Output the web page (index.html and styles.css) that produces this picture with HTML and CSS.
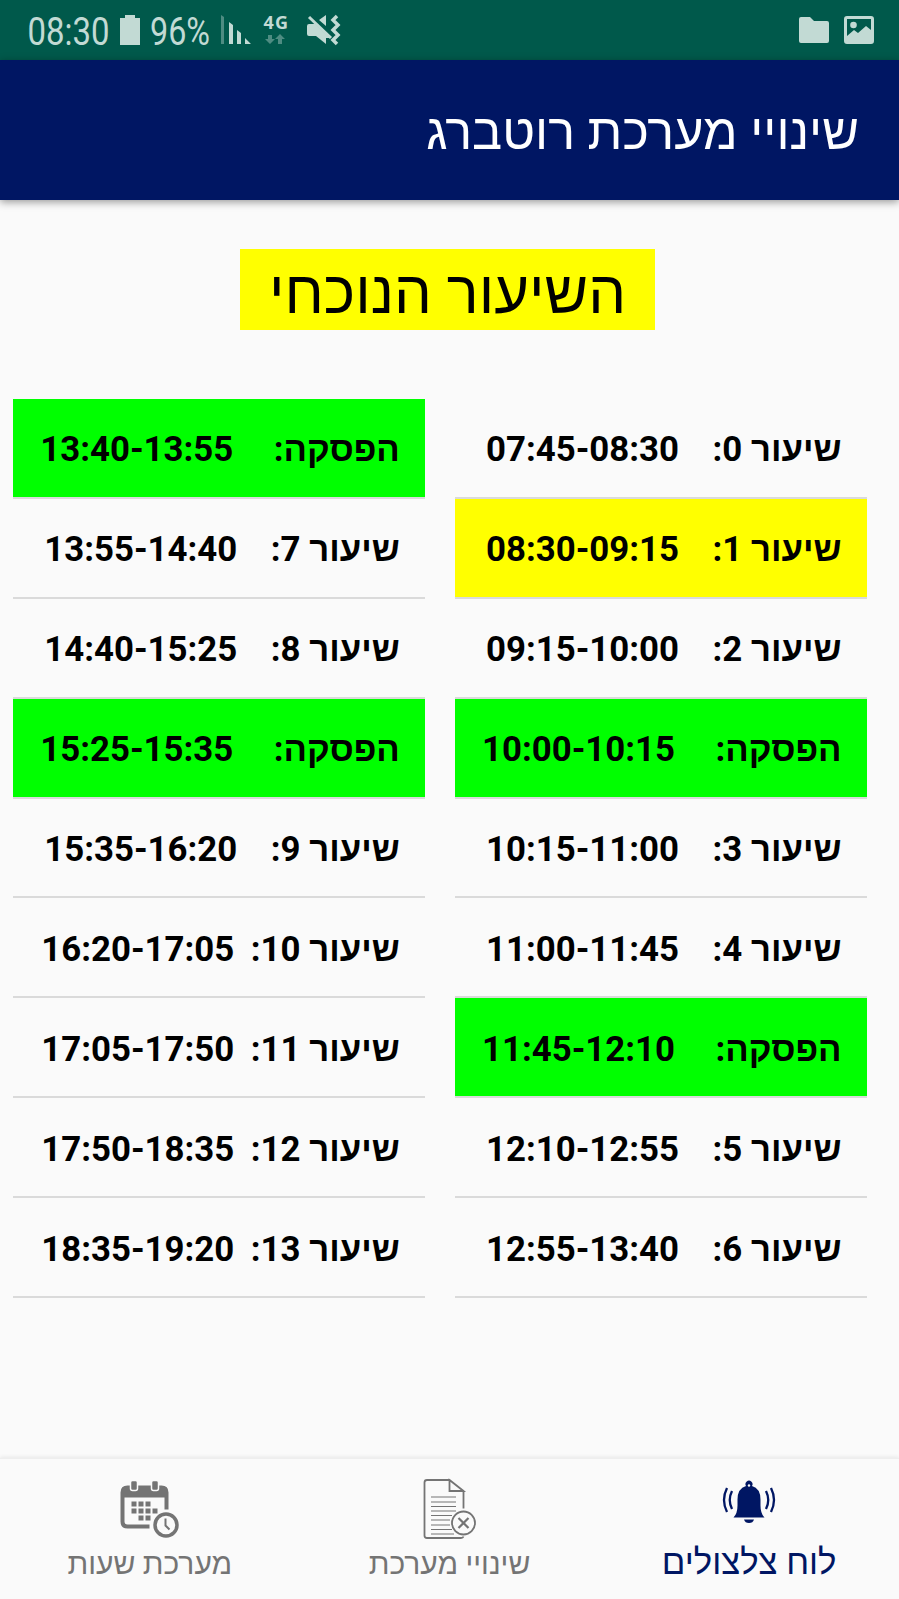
FILE: index.html
```html
<!DOCTYPE html>
<html lang="he" dir="rtl">
<head>
<meta charset="utf-8">
<title>שינויי מערכת רוטברג</title>
<link rel="stylesheet" href="styles.css">
</head>
<body>
<div class="status" dir="ltr">
  <svg class="status-left" width="350" height="60" viewBox="0 0 350 60">
    <text x="27.5" y="44.500" font-size="38" textLength="82" lengthAdjust="spacingAndGlyphs">08:30</text>
    <path d="M125 15h10v3h5v27h-20V18h5z"/>
    <text x="150" y="44.500" font-size="38" textLength="60" lengthAdjust="spacingAndGlyphs">96%</text>
    <path opacity=".4" d="M221 15l3 2v27h-3z"/>
    <path d="M229 22l4 3v19h-4zM237 30l4 3v11h-4zM245 38l6 6h-6z"/>
    <text class="net" x="263.500" y="29" font-size="18" textLength="24.500">4G</text>
    <path opacity=".4" d="M268 35h4v4h3l-5 5-5-5h3zM278 44h4v-5h3l-5-5-5 5h3z"/>
    <path d="M309 24h6l15 14h-4v6l-10-8h-7q-2 0-2-2v-8q0-2 2-2zM319 20l7-5v11z"/>
    <path d="M309 17l22 21" fill="none" stroke="#c2dad4" stroke-width="3"/>
    <path d="M337 16l-4 4 5 5-5 5 5 5-5 5 4 4" fill="none" stroke="#c2dad4" stroke-width="3.500"/>
  </svg>
  <svg class="status-right" width="110" height="60" viewBox="0 0 110 60">
    <path d="M12 17h8l4 4h13q2 0 2 2v18q0 2-2 2H11q-2 0-2-2V19q0-2 2-2z"/>
    <path fill-rule="evenodd" d="M57 16h24q3 0 3 3v22q0 3-3 3H57q-3 0-3-3V19q0-3 3-3zm0 3v17l7-6 4 3 8-7 5 4V19z"/>
    <circle cx="63.500" cy="25" r="3.300"/>
  </svg>
</div>
<header class="appbar"><h1>שינויי מערכת רוטברג</h1></header>
<main>
  <div class="current"><span>השיעור הנוכחי</span></div>
  <div class="columns">
    <div class="column">
      <div class="row"><b>שיעור 0:</b><time>07:45-08:30</time></div>
      <div class="row now"><b>שיעור 1:</b><time>08:30-09:15</time></div>
      <div class="row"><b>שיעור 2:</b><time>09:15-10:00</time></div>
      <div class="row break"><b>הפסקה:</b><time>10:00-10:15</time></div>
      <div class="row"><b>שיעור 3:</b><time>10:15-11:00</time></div>
      <div class="row"><b>שיעור 4:</b><time>11:00-11:45</time></div>
      <div class="row break"><b>הפסקה:</b><time>11:45-12:10</time></div>
      <div class="row"><b>שיעור 5:</b><time>12:10-12:55</time></div>
      <div class="row"><b>שיעור 6:</b><time>12:55-13:40</time></div>
    </div>
    <div class="column">
      <div class="row break"><b>הפסקה:</b><time>13:40-13:55</time></div>
      <div class="row"><b>שיעור 7:</b><time>13:55-14:40</time></div>
      <div class="row"><b>שיעור 8:</b><time>14:40-15:25</time></div>
      <div class="row break"><b>הפסקה:</b><time>15:25-15:35</time></div>
      <div class="row"><b>שיעור 9:</b><time>15:35-16:20</time></div>
      <div class="row wide"><b>שיעור 10:</b><time>16:20-17:05</time></div>
      <div class="row wide"><b>שיעור 11:</b><time>17:05-17:50</time></div>
      <div class="row wide"><b>שיעור 12:</b><time>17:50-18:35</time></div>
      <div class="row wide"><b>שיעור 13:</b><time>18:35-19:20</time></div>
    </div>
  </div>
</main>
<nav class="tabs">
  <a class="tab active">
    <svg width="100" height="81" viewBox="699 1458 100 81">
      <g fill="#001663"><path d="M733.500 1516.500q4-4 4-12v-6q0-11 8.500-13.500a3.500 3.500 0 1 1 6 0q8.500 2.500 8.500 13.500v6q0 8 4 12z"/><path d="M744 1518.500h10q-1 3.500-5 3.500t-5-3.500z"/></g>
      <circle cx="749" cy="1484.500" r="1.200" fill="#fafafa"/>
      <path fill="none" stroke="#001663" stroke-width="2.300" d="M727 1487q-6 12 0 24M732 1490q-4.500 9 0 18M771 1487q6 12 0 24M766 1490q4.500 9 0 18"/>
    </svg>
    <span>לוח צלצולים</span>
  </a>
  <a class="tab">
    <svg width="100" height="83" viewBox="400 1458.500 100 83">
      <g fill="none" stroke="#747474" stroke-width="1.800"><path d="M463.500 1508v-17.500l-14-11H427q-2.500 0-2.500 2.500v53q0 2.500 2.500 2.500h34q2 0 2.500-1.500M449.500 1479.500v11h14z"/>
      <path stroke-width="1.200" d="M431 1496.500h25M431 1501.500h25M431 1506h25M431 1510.500h25M431 1515h21M431 1519.500h19M431 1524.500h19M431 1529h21M431 1533.500h23"/>
      <circle cx="463.500" cy="1522.500" r="11.500"/><path stroke-width="2.200" d="M458.500 1517.500l10 10m0-10l-10 10"/></g>
    </svg>
    <span>שינויי מערכת</span>
  </a>
  <a class="tab">
    <svg width="100" height="83" viewBox="100.500 1458.500 100 83">
      <path fill="#747474" d="M121 1492q0-7 7-7h34q7 0 7 7v17h-4v-12h-40v24q0 3 3 3h22v4h-22q-7 0-7-7z"/>
      <g fill="#747474" stroke="#fafafa" stroke-width="1.500"><rect x="131" y="1480" width="7" height="10" rx="2"/><rect x="152" y="1480" width="7" height="10" rx="2"/></g>
      <path fill="#747474" d="M132 1501h5v5h-5zm7 0h5v5h-5zm7 0h5v5h-5zm-14 7h5v5h-5zm7 0h5v5h-5zm7 0h5v5h-5zm7 0h5v5h-5zm-14 7h5v5h-5zm7 0h5v5h-5z"/>
      <circle cx="166.500" cy="1524.500" r="11" fill="#fafafa" stroke="#747474" stroke-width="3.500"/>
      <path fill="none" stroke="#747474" stroke-width="2" d="M166 1518v7l4 4"/>
    </svg>
    <span>מערכת שעות</span>
  </a>
</nav>
</body>
</html>
```
FILE: styles.css
```css
* { box-sizing: border-box; }
body {
  margin: 0;
  width: 899px;
  height: 1599px;
  display: flex;
  flex-direction: column;
  overflow: hidden;
  background: #fafafa;
  color: #000;
  font-family: Roboto, "Liberation Sans", sans-serif;
}
svg { display: block; }
.status {
  height: 60px;
  flex: none;
  display: flex;
  justify-content: space-between;
  background: #00594b;
  fill: #c2dad4;
}
.status-right { margin-right: -1px; }
.net { font-family: "Noto Sans", sans-serif; font-weight: 700; }
.appbar {
  height: 140px;
  flex: none;
  padding: 4px 40px 0 0;
  display: flex;
  align-items: center;
  background: #001663;
  box-shadow: 0 2px 8px rgba(0, 0, 0, .4);
}
.appbar h1 {
  margin: 0;
  color: #fff;
  font-size: 50.4px;
  font-weight: 400;
  line-height: 70px;
  white-space: nowrap;
}
main { flex: 1; padding-top: 49px; }
.current {
  width: 415px;
  height: 80.5px;
  margin-right: 244px;
  padding-top: 8px;
  display: flex;
  align-items: center;
  justify-content: center;
  background: #ff0;
  font-size: 59.8px;
  line-height: 72px;
  white-space: nowrap;
}
.columns {
  display: flex;
  gap: 29.5px;
  padding: 69.5px 32px 0 13px;
}
.column { flex: 1; }
.row {
  height: 99.9px;
  display: flex;
  align-items: center;
  padding: 3px 25.5px 0 0;
  border-bottom: 2px solid #dadada;
  font-size: 34.8px;
  font-weight: 700;
  line-height: 48px;
  white-space: nowrap;
}
.row b { width: 162.5px; flex: none; font-weight: 700; }
.row.break b { width: 166.5px; letter-spacing: -.1px; }
.row.wide b { width: 165.5px; }
.row time { direction: ltr; }
.now { background: #ff0; }
.break { background: #0f0; }
.tabs {
  height: 141px;
  flex: none;
  display: flex;
  border-top: 1px solid #eee;
  box-shadow: 0 -1px 4px rgba(0, 0, 0, .08);
}
.tab {
  flex: 1;
  display: flex;
  flex-direction: column;
  align-items: center;
  color: #747474;
  font-size: 30px;
  line-height: 44px;
  white-space: nowrap;
}
.active { color: #001663; font-size: 34.8px; }
```
